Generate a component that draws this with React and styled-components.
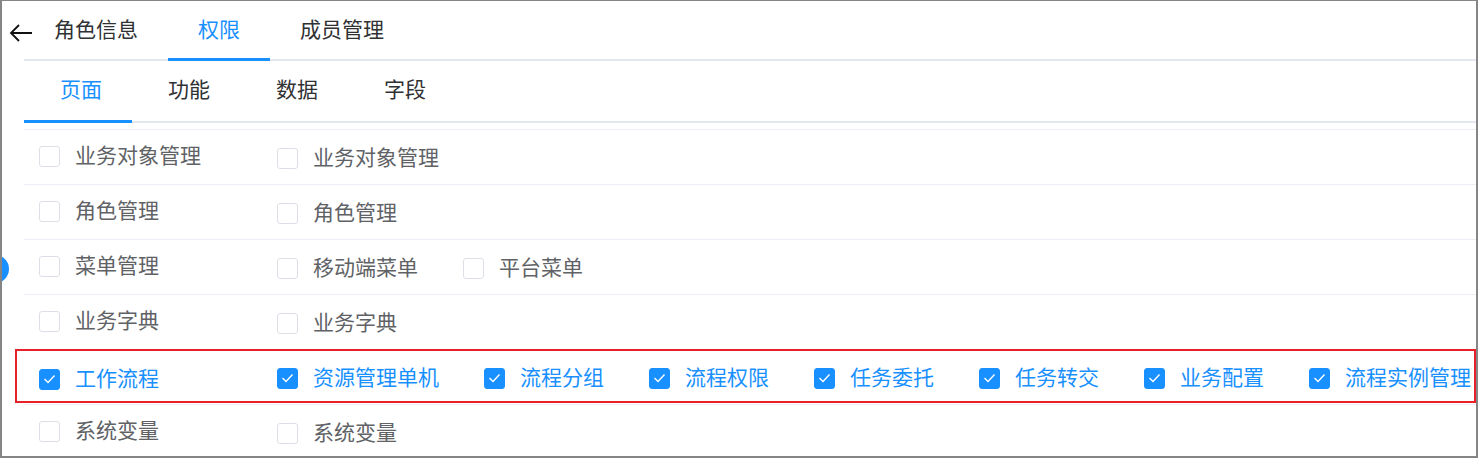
import React from 'react';
import styled, { createGlobalStyle, css } from 'styled-components';

const BLUE = '#1890ff';

const GlobalStyle = createGlobalStyle`
  body {
    margin: 0;
    background: #fff;
    font-family: "Noto Sans CJK SC", "Noto Sans", sans-serif;
  }
`;

const Frame = styled.div`
  position: relative;
  width: 1478px;
  height: 458px;
  box-sizing: border-box;
  border-style: solid;
  border-color: #858585;
  border-width: 1px 2px 2px 2px;
  background: #fff;
  overflow: hidden;
`;

const Handle = styled.span`
  position: absolute;
  left: -21px;
  top: 254px;
  width: 28px;
  height: 28px;
  border-radius: 50%;
  background: ${BLUE};
`;

const Header = styled.div`
  display: flex;
  align-items: stretch;
  height: 60px;
`;

const BackButton = styled.button`
  display: flex;
  align-items: center;
  justify-content: center;
  width: 24px;
  margin-left: 7px;
  padding: 4px 0 0;
  border: none;
  background: none;
  color: #111;
  cursor: pointer;
`;

const Main = styled.div`
  margin-left: 22px;
`;

const TabNav = styled.div`
  display: flex;
  flex: 1;
  box-shadow: inset 0 -2px 0 #e4e7ed;
  margin-left: ${p => p.$offset || 0}px;
`;

const Tab = styled.div`
  display: flex;
  align-items: center;
  padding: ${p => p.$pad};
  font-size: 21px;
  color: #303133;
  cursor: pointer;
  white-space: nowrap;

  ${p => p.$active && css`
    color: ${BLUE};
    box-shadow: inset 0 -3px 0 ${BLUE};
  `}
`;

const HeaderTab = styled(Tab)`
  padding-bottom: 6px;
`;

const SubNav = styled(TabNav)`
  height: 62px;
  margin-bottom: 6px;
`;

const SubTab = styled(Tab)`
  padding-bottom: 8px;
`;

const Row = styled.div`
  position: relative;
  display: flex;
  align-items: center;
  height: 55px;
  box-sizing: border-box;
  padding: 2px 0 0 15px;
  border-top: 1px solid #ebeef5;

  ${p => p.$marked && css`
    &::after {
      content: '';
      position: absolute;
      left: -9px;
      right: 0;
      top: -1px;
      bottom: 1px;
      border: 2px solid #e8202a;
      pointer-events: none;
    }
  `}
`;

const LeadCell = styled.div`
  width: 238px;
  flex-shrink: 0;
`;

const Item = styled.label`
  display: inline-flex;
  align-items: center;
  margin-right: 45px;
  font-size: 21px;
  white-space: nowrap;
  color: ${p => (p.$checked ? BLUE : '#606266')};
  cursor: pointer;
`;

const Box = styled.span`
  display: inline-flex;
  align-items: center;
  justify-content: center;
  width: 21px;
  height: 21px;
  box-sizing: border-box;
  margin-right: 15px;
  border-radius: 3px;
  border: 1px solid ${p => (p.$checked ? BLUE : '#dcdfe6')};
  background: ${p => (p.$checked ? BLUE : '#fff')};
`;

const Text = styled.span`
  line-height: 1;
  margin-bottom: 3px;
`;

const headerTabs = ['角色信息', '权限', '成员管理'];
const subTabs = ['页面', '功能', '数据', '字段'];

const rows = [
  { items: ['业务对象管理', '业务对象管理'] },
  { items: ['角色管理', '角色管理'] },
  { items: ['菜单管理', '移动端菜单', '平台菜单'] },
  { items: ['业务字典', '业务字典'] },
  {
    items: ['工作流程', '资源管理单机', '流程分组', '流程权限', '任务委托', '任务转交', '业务配置', '流程实例管理'],
    checked: true,
    marked: true,
  },
  { items: ['系统变量', '系统变量'] },
];

function ArrowLeft() {
  return (
    <svg width="24" height="20" viewBox="0 0 24 20" fill="none">
      <path d="M2 10H23M10 2L2 10L10 18" stroke="currentColor" strokeWidth="1.8" strokeLinejoin="miter" />
    </svg>
  );
}

function Checkbox({ label, checked }) {
  return (
    <Item $checked={checked}>
      <Box $checked={checked}>
        {checked && (
          <svg width="13" height="10" viewBox="0 0 13 10" fill="none">
            <path d="M1.5 5L5 8.5L11.5 1.5" stroke="#fff" strokeWidth="1.4" />
          </svg>
        )}
      </Box>
      <Text>{label}</Text>
    </Item>
  );
}

export default function App() {
  return (
    <>
      <GlobalStyle />
      <Frame>
        <Handle />
        <Header>
          <BackButton>
            <ArrowLeft />
          </BackButton>
          <TabNav $offset={-9}>
            {headerTabs.map(t => (
              <HeaderTab key={t} $pad="0 30px" $active={t === '权限'}>
                {t}
              </HeaderTab>
            ))}
          </TabNav>
        </Header>
        <Main>
          <SubNav>
            {subTabs.map(t => (
              <SubTab key={t} $pad="0 30px 0 36px" $active={t === '页面'}>
                {t}
              </SubTab>
            ))}
          </SubNav>
          {rows.map((row, i) => (
            <Row key={i} $marked={row.marked}>
              <LeadCell>
                <Checkbox label={row.items[0]} checked={row.checked} />
              </LeadCell>
              {row.items.slice(1).map((label, j) => (
                <Checkbox key={j} label={label} checked={row.checked} />
              ))}
            </Row>
          ))}
        </Main>
      </Frame>
    </>
  );
}
